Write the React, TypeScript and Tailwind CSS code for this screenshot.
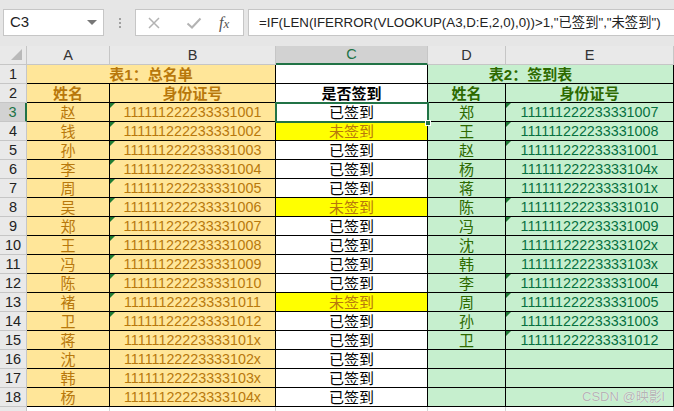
import React from "react";

const FONT = "font-['Liberation_Sans','Noto_Sans_CJK_SC',sans-serif]";

const A_NAMES = ["赵", "钱", "孙", "李", "周", "吴", "郑", "王", "冯", "陈", "褚", "卫", "蒋", "沈", "韩", "杨"];
const B_IDS = [
  "111111222233331001",
  "111111222233331002",
  "111111222233331003",
  "111111222233331004",
  "111111222233331005",
  "111111222233331006",
  "111111222233331007",
  "111111222233331008",
  "111111222233331009",
  "111111222233331010",
  "111111222233331011",
  "111111222233331012",
  "11111122223333101x",
  "11111122223333102x",
  "11111122223333103x",
  "11111122223333104x",
];
const MISSING = new Set([1, 5, 10]);
const D_NAMES = ["郑", "王", "赵", "杨", "蒋", "陈", "冯", "沈", "韩", "李", "周", "孙", "卫"];
const E_IDS = [
  "111111222233331007",
  "111111222233331008",
  "111111222233331001",
  "11111122223333104x",
  "11111122223333101x",
  "111111222233331010",
  "111111222233331009",
  "11111122223333102x",
  "11111122223333103x",
  "111111222233331004",
  "111111222233331005",
  "111111222233331003",
  "111111222233331012",
];

function Tri() {
  return (
    <span className="absolute left-0 top-0 h-0 w-0 border-t-[5px] border-r-[5px] border-t-[#1e7b34] border-r-transparent" />
  );
}

function RowHead({ n, active, hideText }: { n: number; active?: boolean; hideText?: boolean }) {
  return (
    <div
      className={
        active
          ? "flex items-center justify-center bg-[#d2d2d2] text-[#217346] border-b border-b-[#c6c6c6] border-r-2 border-r-[#217346] text-[14.5px]"
          : "flex items-center justify-center bg-[#e9e9e9] text-[#222] border-b border-b-[#c6c6c6] border-r border-r-[#c6c6c6] text-[14.5px]"
      }
    >
      {hideText ? null : n}
    </div>
  );
}

export default function App() {
  const rows: React.ReactNode[] = [];

  // column headers
  rows.push(
    <div key="corner" className="relative bg-[#e9e9e9] border-r border-b border-[#c6c6c6]">
      <svg width="11" height="11" viewBox="0 0 11 11" className="absolute right-[4px] bottom-[4px]">
        <path d="M11 0 L11 11 L0 11 Z" fill="#b9b9b9" />
      </svg>
    </div>
  );
  ["A", "B", "C", "D", "E"].forEach((l) => {
    const active = l === "C";
    rows.push(
      <div
        key={"h" + l}
        className={
          active
            ? "flex items-center justify-center bg-[#d2d2d2] text-[#217346] border-r border-r-[#c6c6c6] border-b-2 border-b-[#217346] text-[14.5px]"
            : "flex items-center justify-center bg-[#e9e9e9] text-[#333] border-r border-r-[#c6c6c6] border-b border-b-[#c6c6c6] text-[14.5px]"
        }
      >
        {l}
      </div>
    );
  });

  // row 1
  rows.push(<RowHead key="r1" n={1} />);
  rows.push(
    <div
      key="ab1"
      className="col-span-2 flex items-center justify-center bg-[#ffe699] text-[#b8780c] font-bold text-[15px] border-r border-b border-black"
    >
      表1：总名单
    </div>
  );
  rows.push(<div key="c1" className="bg-white border-r border-b border-black" />);
  rows.push(
    <div
      key="de1"
      className="col-span-2 flex items-center justify-center pr-[40px] bg-[#c6efce] text-[#2d6a00] font-bold text-[15px] border-r border-b border-black"
    >
      表2：签到表
    </div>
  );

  // row 2
  rows.push(<RowHead key="r2" n={2} />);
  rows.push(
    <div key="a2" className="flex items-center justify-center bg-[#ffe699] text-[#b8780c] font-bold text-[15px] border-r border-b border-black">
      姓名
    </div>
  );
  rows.push(
    <div key="b2" className="flex items-center justify-center bg-[#ffe699] text-[#b8780c] font-bold text-[15px] border-r border-b border-black">
      身份证号
    </div>
  );
  rows.push(
    <div key="c2" className="flex items-center justify-center bg-white text-black font-bold text-[15px] border-r border-b border-black">
      是否签到
    </div>
  );
  rows.push(
    <div key="d2" className="flex items-center justify-center bg-[#c6efce] text-[#2d6a00] font-bold text-[15px] border-r border-b border-black">
      姓名
    </div>
  );
  rows.push(
    <div key="e2" className="flex items-center justify-center bg-[#c6efce] text-[#2d6a00] font-bold text-[15px] border-r border-b border-black">
      身份证号
    </div>
  );

  // data rows 3..18
  for (let i = 0; i < 16; i++) {
    const r = i + 3;
    const missing = MISSING.has(i);
    const bId = B_IDS[i];
    const dName = D_NAMES[i];
    const eId = E_IDS[i];
    rows.push(<RowHead key={"r" + r} n={r} active={r === 3} />);
    rows.push(
      <div key={"a" + r} className="flex items-center justify-center bg-[#ffe699] text-[#b8780c] text-[15px] border-r border-b border-black">
        {A_NAMES[i]}
      </div>
    );
    rows.push(
      <div key={"b" + r} className="relative flex items-center justify-center bg-[#ffe699] text-[#b8780c] text-[14.3px] border-r border-b border-black">
        {!bId.endsWith("x") && <Tri />}
        {bId}
      </div>
    );
    rows.push(
      <div
        key={"c" + r}
        className={
          missing
            ? "flex items-center justify-center bg-[#ffff00] text-[#b8780c] text-[15px] border-r border-b border-black"
            : "flex items-center justify-center bg-white text-black text-[15px] border-r border-b border-black"
        }
      >
        {missing ? "未签到" : "已签到"}
      </div>
    );
    rows.push(
      <div key={"d" + r} className="flex items-center justify-center bg-[#c6efce] text-[#2d6a00] text-[15px] border-r border-b border-black">
        {dName ?? ""}
      </div>
    );
    rows.push(
      <div key={"e" + r} className="relative flex items-center justify-center bg-[#c6efce] text-[#06703f] text-[14.3px] border-r border-b border-black">
        {eId && !eId.endsWith("x") && <Tri />}
        {eId ?? ""}
      </div>
    );
  }

  // row 19 partial (only a sliver visible)
  rows.push(<RowHead key="r19" n={19} hideText />);
  for (let c = 0; c < 5; c++) {
    rows.push(<div key={"x19" + c} className="bg-white border-r border-b border-[#d4d4d4]" />);
  }

  return (
    <div className={`w-[674px] h-[411px] overflow-hidden bg-white ${FONT}`}>
      {/* toolbar */}
      <div className="h-[46px] bg-[#e6e6e6] flex items-start pt-[9px] pl-[3px]">
        <div className="shrink-0 w-[101px] h-[27px] bg-white border border-[#c6c6c6] flex items-center pl-[6px] pr-[6px] text-[15px] text-[#222]">
          <span className="flex-1">C3</span>
          <span className="h-0 w-0 border-l-[5px] border-r-[5px] border-t-[5px] border-l-transparent border-r-transparent border-t-[#777]" />
        </div>
        <div className="shrink-0 w-[31px] h-[27px] flex flex-col items-center justify-center gap-[2px]">
          <span className="w-[2px] h-[2px] bg-[#a0a0a0]" />
          <span className="w-[2px] h-[2px] bg-[#a0a0a0]" />
          <span className="w-[2px] h-[2px] bg-[#a0a0a0]" />
        </div>
        <div className="shrink-0 w-[109px] h-[27px] bg-white border border-[#c6c6c6] flex items-center">
          <svg width="14" height="14" viewBox="0 0 14 14" className="ml-[11px] shrink-0">
            <path d="M2 2 L12 12 M12 2 L2 12" stroke="#b3b3b3" strokeWidth="1.5" fill="none" />
          </svg>
          <svg width="16" height="14" viewBox="0 0 16 14" className="ml-[25px] shrink-0">
            <path d="M1.5 7.5 L6 11.5 L14.5 2.5" stroke="#b3b3b3" strokeWidth="2" fill="none" />
          </svg>
          <span className="ml-[17px] font-['Liberation_Serif',serif] italic text-[16px] text-[#555] leading-none">
            f<span className="text-[13px]">x</span>
          </span>
        </div>
        <div className="ml-[4px] flex-1 min-w-0 overflow-hidden h-[27px] bg-white border border-[#c6c6c6] border-r-0 flex items-center pl-[10px] text-[13.3px] text-[#222] whitespace-nowrap">
          =IF(LEN(IFERROR(VLOOKUP(A3,D:E,2,0),0))&gt;1,"已签到","未签到")
        </div>
      </div>

      {/* sheet */}
      <div className="relative">
        <div className="grid grid-cols-[27px_83px_166px_152px_78px_168px] auto-rows-[19px] leading-none">
          {rows}
        </div>
        {/* selection */}
        <div className="absolute left-[275px] top-[56px] w-[154px] h-[21px] border-2 border-[#217346] pointer-events-none" />
        <div className="absolute left-[425px] top-[74px] w-[6px] h-[6px] bg-[#217346] border border-white" />
        {/* watermark */}
        <div className="absolute left-[582px] top-[341px] text-[13px] text-[#b4b4b4] [text-shadow:0_0_1px_#ffffff]">
          CSDN @映影l
        </div>
      </div>
    </div>
  );
}
